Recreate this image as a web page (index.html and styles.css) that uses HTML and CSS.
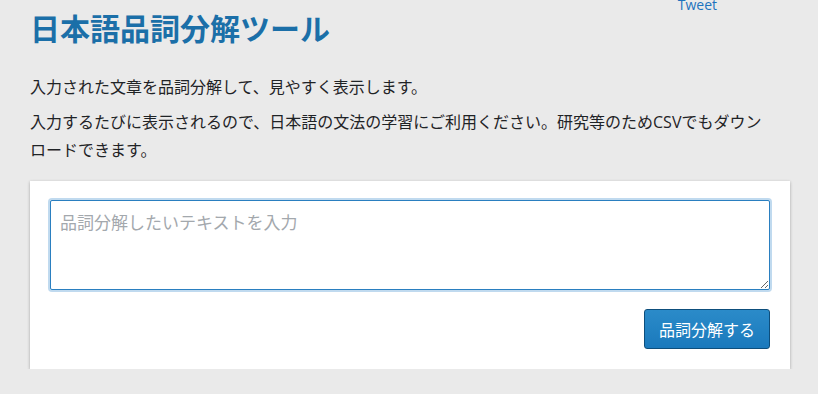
FILE: index.html
```html
<!DOCTYPE html>
<html lang="ja">
<head>
<meta charset="utf-8">
<title>日本語品詞分解ツール</title>
<link rel="stylesheet" href="styles.css">
</head>
<body>
<div class="page">
  <header class="header">
    <h1 class="title">日本語品詞分解ツール</h1>
    <a class="tweet" href="#">Tweet</a>
  </header>
  <p class="lead">入力された文章を品詞分解して、見やすく表示します。</p>
  <p class="lead">入力するたびに表示されるので、日本語の文法の学習にご利用ください。研究等のためCSVでもダウンロードできます。</p>
  <section class="card">
    <textarea class="input" placeholder="品詞分解したいテキストを入力"></textarea>
    <div class="actions">
      <button class="btn-primary" type="button">品詞分解する</button>
    </div>
  </section>
</div>
</body>
</html>
```

FILE: styles.css
```css
html, body {
  margin: 0;
  padding: 0;
}
body {
  background: #eaeaea;
  color: #23282d;
  font-family: "Open Sans", "Noto Sans CJK JP", sans-serif;
  font-size: 16px;
}
.page {
  width: 760px;
  padding: 7px 0 0 30px;
}
.header {
  display: flex;
  align-items: flex-start;
  margin-bottom: 26px;
}
.title {
  margin: 0;
  font-family: "Noto Sans CJK JP", sans-serif;
  font-size: 30px;
  line-height: 40px;
  font-weight: 700;
  color: #1b6fa8;
}
.tweet {
  margin: -12px 73px 0 auto;
  font-size: 14px;
  line-height: 20px;
  color: #1e73be;
  text-decoration: none;
}
.lead {
  margin: 0;
  font-family: "Open Sans", "Noto Sans CJK JP", sans-serif;
  line-height: 28px;
  line-break: strict;
  color: #1f2326;
}
.lead + .lead {
  margin-top: 7px;
}
.card {
  margin-top: 17px;
  background: #fff;
  box-shadow: 0 1px 3px rgba(0, 0, 0, 0.3);
  padding: 19px 20px 20px;
}
.input {
  display: block;
  box-sizing: border-box;
  width: 100%;
  height: 90px;
  margin: 0;
  padding: 8px 9px;
  border: 1px solid #2a7fc0;
  border-radius: 2px;
  box-shadow: 0 0 0 2px #c0daef;
  outline: none;
  font-family: "Noto Sans CJK JP", sans-serif;
  font-size: 17px;
  line-height: 25px;
  color: #23282d;
  background: #fff;
}
.input::placeholder {
  color: #a3a8ad;
}
.actions {
  display: flex;
  justify-content: flex-end;
  margin-top: 19px;
}
.btn-primary {
  box-sizing: border-box;
  height: 40px;
  padding: 0 14px;
  border: 1px solid #0d4e7c;
  border-radius: 3px;
  background: linear-gradient(#2b8bc9, #1a79bc);
  color: #fff;
  font-family: "Noto Sans CJK JP", sans-serif;
  font-size: 16px;
  line-height: 38px;
  cursor: pointer;
}
```
